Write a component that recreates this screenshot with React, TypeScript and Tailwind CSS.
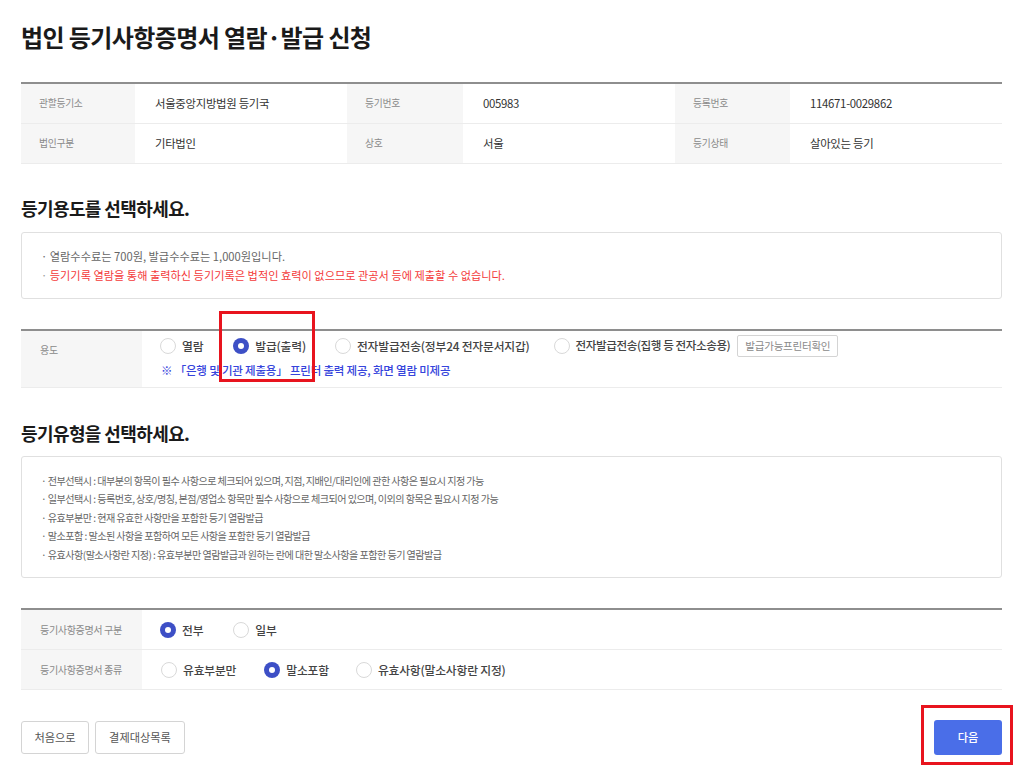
import React from "react";

type RadioProps = { checked?: boolean; label: string; tight?: boolean };

function Radio({ checked, label, tight }: RadioProps) {
  return (
    <span className="flex items-center gap-[6px]">
      {checked ? (
        <span className="flex h-4 w-4 items-center justify-center rounded-full bg-[#3d4fc6]">
          <span className="h-[6px] w-[6px] rounded-full bg-white" />
        </span>
      ) : (
        <span className="h-4 w-4 rounded-full border border-[#d9d9d9] bg-white" />
      )}
      <span
        className={
          tight
            ? "text-[11.6px] font-medium tracking-[-0.45px] text-[#444]"
            : "text-[11.8px] font-medium tracking-[-0.2px] text-[#444]"
        }
      >
        {label}
      </span>
    </span>
  );
}

const infoRows: [string, string][][] = [
  [
    ["관할등기소", "서울중앙지방법원 등기국"],
    ["등기번호", "005983"],
    ["등록번호", "114671-0029862"],
  ],
  [
    ["법인구분", "기타법인"],
    ["상호", "서울"],
    ["등기상태", "살아있는 등기"],
  ],
];

const typeNotes = [
  "전부선택시 : 대부분의 항목이 필수 사항으로 체크되어 있으며, 지점, 지배인/대리인에 관한 사항은 필요시 지정 가능",
  "일부선택시 : 등록번호, 상호/명칭, 본점/영업소 항목만 필수 사항으로 체크되어 있으며, 이외의 항목은 필요시 지정 가능",
  "유효부분만 : 현재 유효한 사항만을 포함한 등기 열람발급",
  "말소포함 : 말소된 사항을 포함하여 모든 사항을 포함한 등기 열람발급",
  "유효사항(말소사항란 지정) : 유효부분만 열람발급과 원하는 란에 대한 말소사항을 포함한 등기 열람발급",
];

export default function App() {
  return (
    <div className="relative h-[767px] w-[1024px] overflow-hidden bg-white font-['Noto_Sans_CJK_KR','Noto_Sans',sans-serif] text-[#333]">
      <div className="flex w-[981px] flex-col pl-[21px] box-content">
        <h1 className="mt-[22px] text-[24px] font-bold leading-[30px] tracking-[-0.6px] text-[#1a1a1a]">
          법인 등기사항증명서 열람·발급 신청
        </h1>

        {/* registry summary */}
        <div className="mt-[30px] border-t-2 border-[#8e8e8e]">
          {infoRows.map((row, i) => (
            <div
              key={i}
              className="grid h-[40px] grid-cols-[114px_212px_116px_212px_115px_1fr] border-b border-[#ececec]"
            >
              {row.map(([k, v]) => (
                <React.Fragment key={k}>
                  <div className="flex items-center bg-[#f6f6f6] pl-[18px] text-[9.8px] tracking-[-0.3px] text-[#8a8a8a]">
                    {k}
                  </div>
                  <div className="flex items-center pl-[20px] text-[11.4px] tracking-[-0.3px] text-[#333]">
                    {v}
                  </div>
                </React.Fragment>
              ))}
            </div>
          ))}
        </div>

        <h2 className="mt-[32px] text-[18px] font-bold leading-[24px] tracking-[-0.6px] text-[#1a1a1a]">
          등기용도를 선택하세요.
        </h2>

        <div className="mt-[12px] rounded-[3px] border border-[#e0e0e0] pb-[13px] pl-[19px] pt-[14px] text-[11.2px] leading-[19px]">
          <p className="text-[#666]">· 열람수수료는 700원, 발급수수료는 1,000원입니다.</p>
          <p className="text-[#f43a3a]">
            <span className="text-[#999]">·</span> 등기기록 열람을 통해 출력하신 등기기록은 법적인 효력이 없으므로 관공서 등에 제출할 수 없습니다.
          </p>
        </div>

        {/* purpose selection */}
        <div className="mt-[30px] flex h-[59px] border-t-2 border-b border-t-[#8e8e8e] border-b-[#ececec]">
          <div className="w-[121px] shrink-0 bg-[#f6f6f6] pl-[19px] pt-[11px] text-[10px] tracking-[-0.3px] text-[#8a8a8a]">
            용도
          </div>
          <div className="flex flex-col pl-[18px] pt-[5px]">
            <div className="flex h-[20px] items-center">
              <Radio label="열람" />
              <span className="w-[30px]" />
              <Radio checked label="발급(출력)" />
              <span className="w-[29px]" />
              <Radio label="전자발급전송(정부24 전자문서지갑)" />
              <span className="w-[24px]" />
              <Radio tight label="전자발급전송(집행 등 전자소송용)" />
              <button className="ml-[7px] flex h-[22px] items-center rounded-[2px] border border-[#d4d4d4] px-[7px] text-[10.6px] tracking-[-0.3px] text-[#8a8a8a]">
                발급가능프린터확인
              </button>
            </div>
            <p className="mt-[6px] pl-px text-[11.5px] font-medium leading-[16px] tracking-[-0.2px] text-[#3644dc]">
              ※ 「은행 및 기관 제출용」 프린터 출력 제공, 화면 열람 미제공
            </p>
          </div>
        </div>

        <h2 className="mt-[33px] text-[18px] font-bold leading-[24px] tracking-[-0.6px] text-[#1a1a1a]">
          등기유형을 선택하세요.
        </h2>

        <div className="mt-[11px] rounded-[3px] border border-[#e0e0e0] pb-[13px] pl-[19px] pt-[15px] text-[10.1px] leading-[18.4px] tracking-[-0.55px] text-[#666]">
          {typeNotes.map((t) => (
            <p key={t}>· {t}</p>
          ))}
        </div>

        {/* certificate type */}
        <div className="mt-[30px] border-t-2 border-[#8e8e8e]">
          <div className="flex h-[40px] border-b border-[#ececec]">
            <div className="flex w-[121px] shrink-0 items-center bg-[#f6f6f6] pl-[19px] text-[10.1px] tracking-[-0.4px] text-[#8a8a8a]">
              등기사항증명서 구분
            </div>
            <div className="flex items-center pl-[18px]">
              <Radio checked label="전부" />
              <span className="w-[30px]" />
              <Radio label="일부" />
            </div>
          </div>
          <div className="flex h-[40px] border-b border-[#ececec]">
            <div className="flex w-[121px] shrink-0 items-center bg-[#f6f6f6] pl-[19px] text-[10.1px] tracking-[-0.4px] text-[#8a8a8a]">
              등기사항증명서 종류
            </div>
            <div className="flex items-center pl-[19px]">
              <Radio label="유효부분만" />
              <span className="w-[28px]" />
              <Radio checked label="말소포함" />
              <span className="w-[27px]" />
              <Radio label="유효사항(말소사항란 지정)" />
            </div>
          </div>
        </div>

        <div className="mt-[30px] flex items-center justify-between">
          <div className="flex gap-[6px]">
            <button className="h-[33px] w-[68px] rounded-[3px] border border-[#d4d4d4] text-[11.2px] text-[#555]">
              처음으로
            </button>
            <button className="h-[33px] w-[90px] rounded-[3px] border border-[#d4d4d4] text-[11.2px] text-[#555]">
              결제대상목록
            </button>
          </div>
          <button className="h-[35px] w-[68px] rounded-[3px] bg-[#4a6ee8] text-[11.2px] font-medium text-white">
            다음
          </button>
        </div>
      </div>

      {/* highlight frames */}
      <div className="pointer-events-none absolute left-[219px] top-[311px] h-[71px] w-[96px] border-[3px] border-[#e8141e]" />
      <div className="pointer-events-none absolute left-[921px] top-[705px] h-[60px] w-[92px] border-[3px] border-[#e8141e]" />
    </div>
  );
}
